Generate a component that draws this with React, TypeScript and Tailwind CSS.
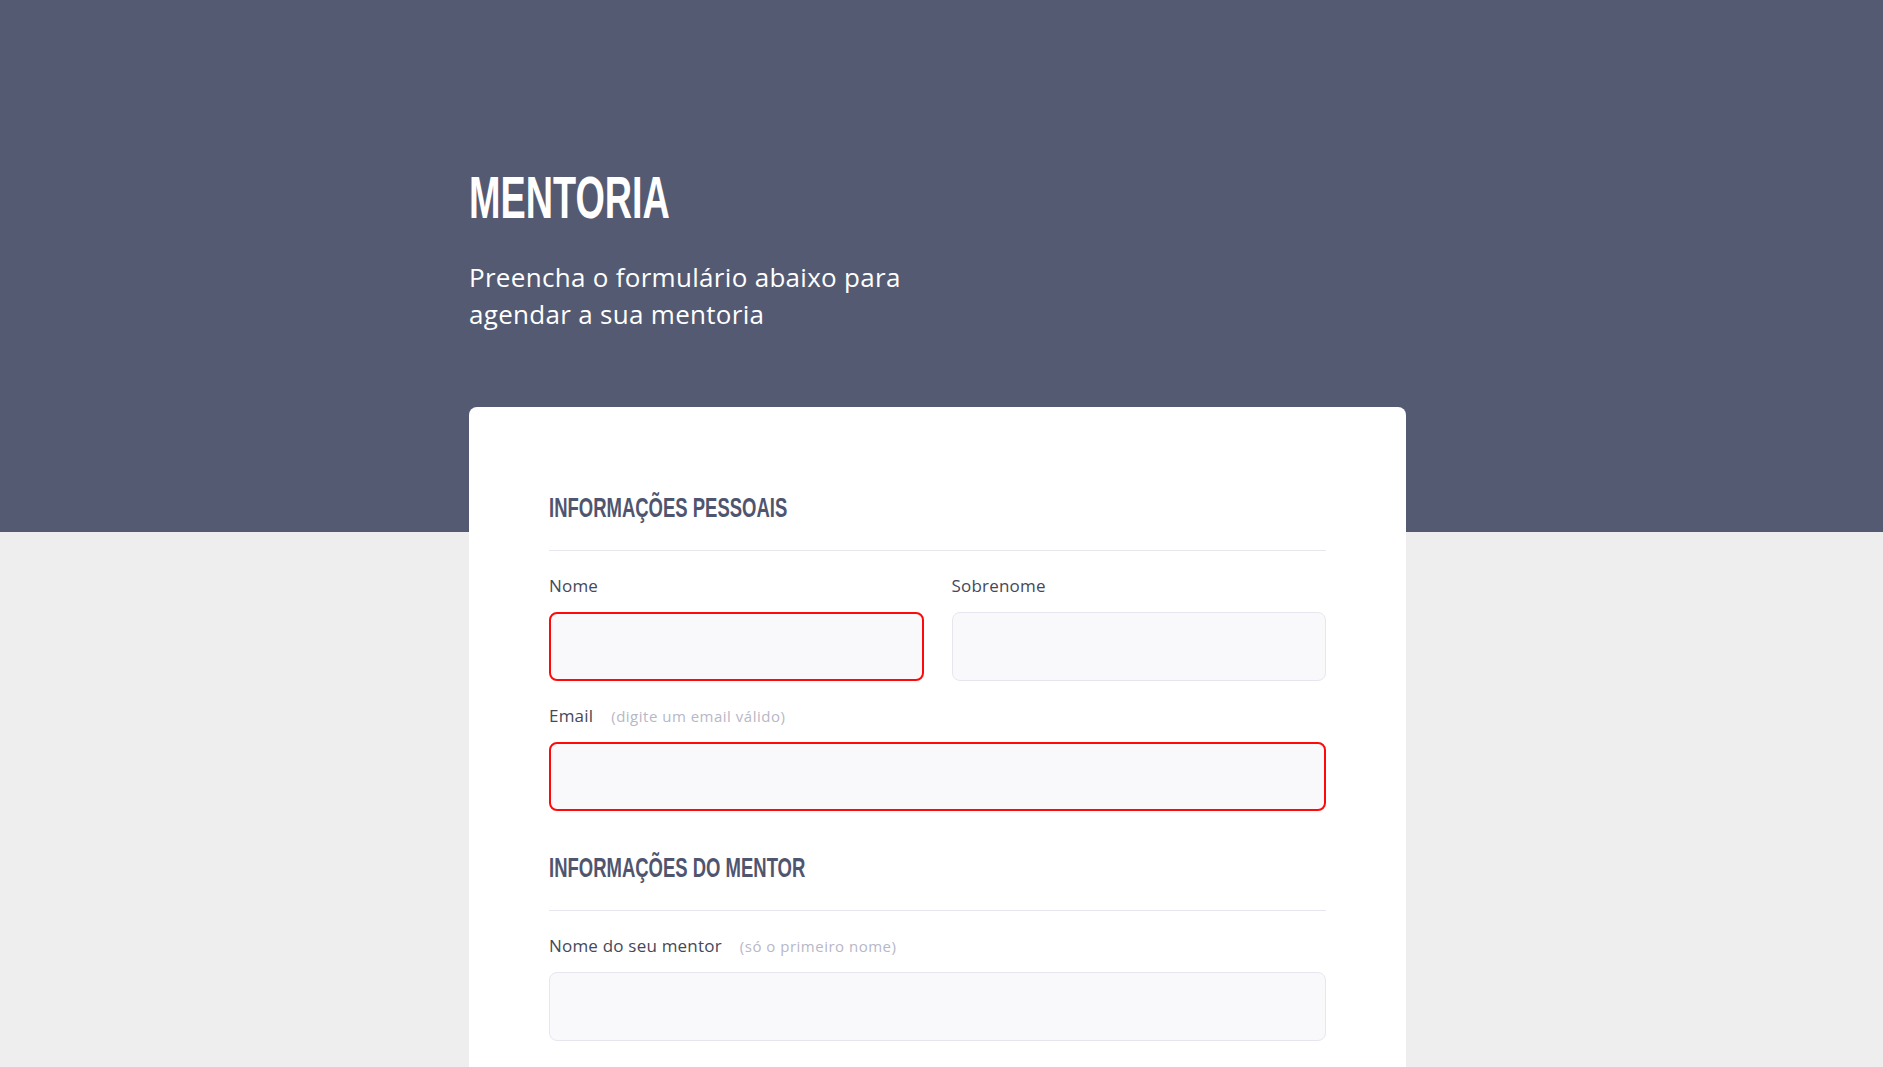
import React from 'react';

const headingFont = "font-['Liberation_Sans','Arial',sans-serif]";
const bodyFont = "font-['Open_Sans','Noto_Sans',sans-serif]";

interface FieldProps {
  label: string;
  hint?: string;
  invalid?: boolean;
}

const Field: React.FC<FieldProps> = ({ label, hint, invalid = false }) => (
  <div className="flex flex-col">
    <div className="flex items-baseline h-6 mb-[14px]">
      <span className="text-[17px] leading-6 tracking-[0.2px] text-[#454859]">{label}</span>
      {hint && (
        <span className="ml-[18px] text-[15px] tracking-[0.5px] text-[#b7b7c7]">{hint}</span>
      )}
    </div>
    <input
      type="text"
      className={`h-[69px] w-full rounded-lg bg-[#f9f9fc] outline-none ${
        invalid ? 'border-2 border-[#ff0a0a]' : 'border border-[#e6e6ee]'
      }`}
    />
  </div>
);

const SectionTitle: React.FC<{ children: React.ReactNode }> = ({ children }) => (
  <div className="border-b border-[#e6e6ee] pb-[26px] mb-[23px]">
    <h2 className={`${headingFont} text-[28px] leading-8 font-bold text-[#50556f] uppercase`}>
      <span className="inline-block origin-left scale-x-[0.66] whitespace-nowrap">{children}</span>
    </h2>
  </div>
);

export default function App() {
  return (
    <div className={`min-h-screen bg-[#eeeeee] ${bodyFont}`}>
      <header className="h-[532px] bg-[#545a72]">
        <div className="mx-auto w-[945px] pt-[168px]">
          <h1 className={`${headingFont} text-[60px] leading-[60px] font-bold text-white`}>
            <span className="inline-block origin-left scale-x-[0.63]">MENTORIA</span>
          </h1>
          <p className="mt-[31px] text-[26px] leading-[37px] tracking-[0.3px] text-white">
            Preencha o formulário abaixo para
            <br />
            agendar a sua mentoria
          </p>
        </div>
      </header>

      <main className="mx-auto w-[945px] -mt-[125px] pb-16">
        <div className="w-[937px] rounded-lg bg-white px-20 pt-[85px] pb-16">
          <SectionTitle>Informações pessoais</SectionTitle>
          <div className="grid grid-cols-2 gap-x-[28px]">
            <Field label="Nome" invalid />
            <Field label="Sobrenome" />
          </div>
          <div className="mt-[23px]">
            <Field label="Email" hint="(digite um email válido)" invalid />
          </div>

          <div className="mt-[41px]">
            <SectionTitle>Informações do mentor</SectionTitle>
            <Field label="Nome do seu mentor" hint="(só o primeiro nome)" />
          </div>
        </div>
      </main>
    </div>
  );
}
